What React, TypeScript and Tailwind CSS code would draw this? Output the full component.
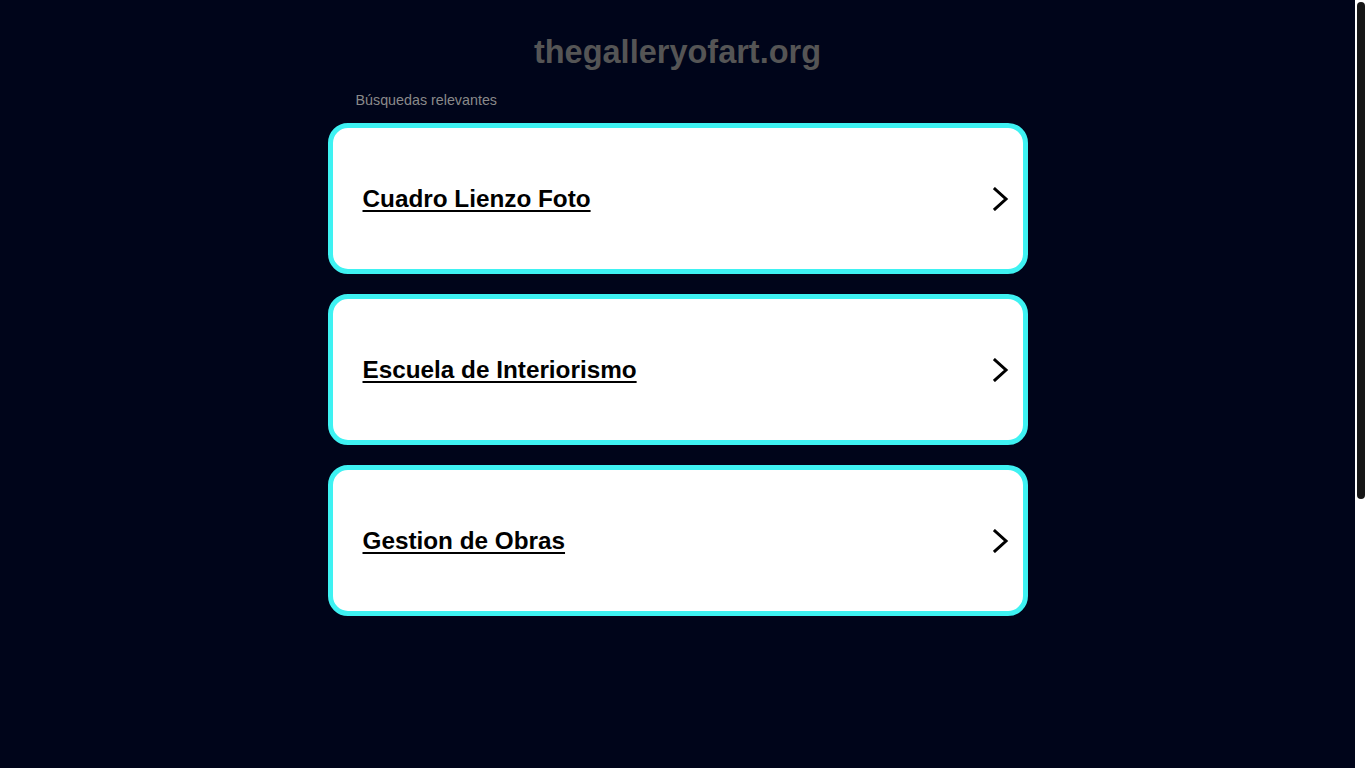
const links = ["Cuadro Lienzo Foto", "Escuela de Interiorismo", "Gestion de Obras"];

function Chevron() {
  return (
    <svg width="16" height="24" viewBox="0 0 16 24" fill="none" className="shrink-0">
      <polyline
        points="2,2 13,12 2,22"
        stroke="#000"
        strokeWidth="3"
        strokeLinecap="square"
        strokeLinejoin="miter"
      />
    </svg>
  );
}

export default function App() {
  return (
    <div className="flex h-[768px] overflow-hidden bg-[#00051a] font-['Liberation_Sans',Arial,sans-serif]">
      <main className="flex-1">
        <div className="mx-auto w-[700px] pt-[31px]">
          <h1 className="text-center text-[32.5px] leading-[42px] font-bold text-[#555555]">
            thegalleryofart.org
          </h1>
          <p className="mt-[19px] pl-[28px] text-[14.3px] leading-[16px] text-[#8a8a8a]">
            Búsquedas relevantes
          </p>
          <div className="mt-[15px] flex flex-col gap-[20px]">
            {links.map((label) => (
              <a
                key={label}
                href="#"
                className="flex h-[151px] items-center justify-between rounded-[20px] border-[5px] border-[#3ef2f2] bg-white pl-[30px] pr-[14px]"
              >
                <span className="text-[24.3px] leading-[28px] font-bold text-black underline underline-offset-[3px] decoration-2">
                  {label}
                </span>
                <Chevron />
              </a>
            ))}
          </div>
        </div>
      </main>
      {/* scrollbar strip */}
      <div className="w-[11px] shrink-0 bg-white pl-[2px] pr-[1px] pt-[2px]">
        <div className="h-[497px] rounded-[4px] bg-[#161616]" />
      </div>
    </div>
  );
}
